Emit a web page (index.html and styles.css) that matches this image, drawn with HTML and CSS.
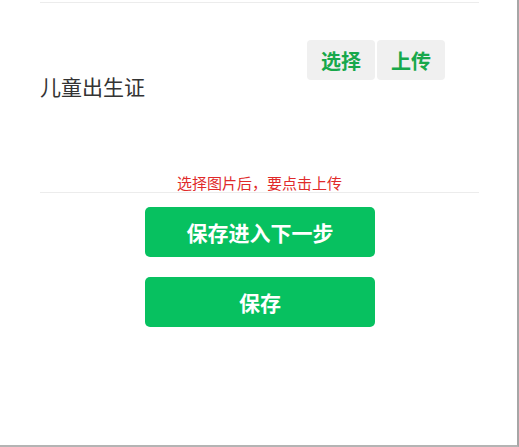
FILE: index.html
```html
<!DOCTYPE html>
<html lang="zh-CN">
<head>
    <meta charset="UTF-8">
    <meta name="viewport" content="width=device-width, initial-scale=1.0">
    <title>上传证件</title>
    <link rel="stylesheet" href="styles.css">
</head>
<body>

    <div class="page">
        <!-- 证件上传 -->
        <div class="form">
            <div class="item">
                <div class="label">儿童出生证</div>
                <div class="actions">
                    <button class="btn-small">选择</button>
                    <button class="btn-small">上传</button>
                </div>
            </div>
            <div class="tip">选择图片后，要点击上传</div>
        </div>

        <!-- 按钮 -->
        <div class="buttons">
            <button class="btn">保存进入下一步</button>
            <button class="btn">保存</button>
        </div>
    </div>

</body>
</html>
```

FILE: styles.css
```css
* {
    margin: 0;
    padding: 0;
    box-sizing: border-box;
    font-family: "Noto Sans CJK SC", "Noto Sans", sans-serif;
}

body {
    background-color: #ffffff;
    color: #333;
}

.page {
    width: 519px;
    height: 447px;
    border-right: 2px solid #a6a6a6;
    border-bottom: 2px solid #b4b4b4;
    padding-top: 2px;
}

.form {
    width: 439px;
    margin-left: 40px;
    border-top: 1px solid #ececec;
    border-bottom: 1px solid #ececec;
}

.item {
    display: flex;
    align-items: center;
    justify-content: space-between;
    height: 171px;
    padding-right: 34px;
}

.label {
    font-size: 21px;
    color: #333;
    margin-top: -5px;
}

.actions {
    display: flex;
    gap: 2px;
    align-self: flex-start;
    margin-top: 37px;
}

.btn-small {
    width: 68px;
    height: 40px;
    background-color: #f0f0f0;
    border: none;
    border-radius: 4px;
    color: #17a84b;
    font-size: 20px;
    font-weight: 700;
    cursor: pointer;
}

.tip {
    text-align: center;
    font-size: 15px;
    line-height: 18px;
    color: #e02a2a;
}

.buttons {
    display: flex;
    flex-direction: column;
    align-items: center;
    gap: 20px;
    margin-top: 14px;
    margin-left: 3px;
}

.btn {
    width: 230px;
    height: 50px;
    background-color: #07c160;
    color: #fff;
    border: none;
    border-radius: 5px;
    font-size: 21px;
    font-weight: 700;
    cursor: pointer;
}
```
